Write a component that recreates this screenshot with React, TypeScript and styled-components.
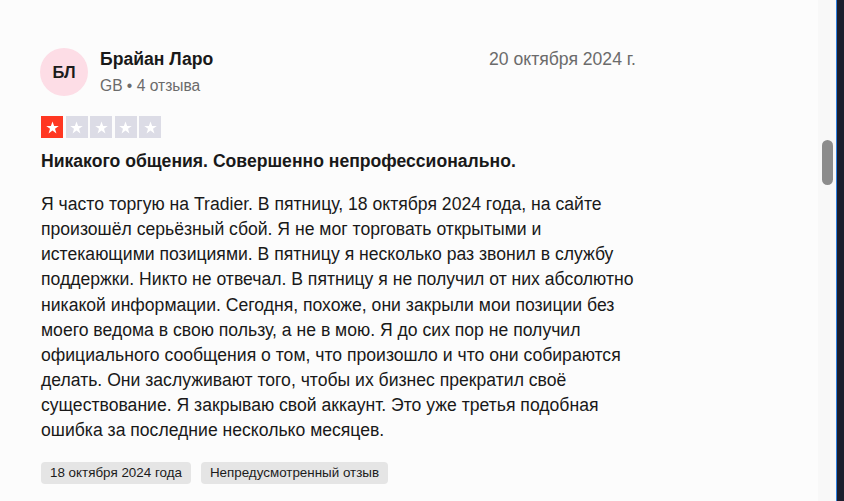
import React from "react";
import styled, { createGlobalStyle } from "styled-components";

const Global = createGlobalStyle`
  html, body { margin: 0; padding: 0; background: #fcfcfc; }
  body { font-family: "Liberation Sans", Arial, sans-serif; color: #191919; }
  * { box-sizing: border-box; }
`;

const Page = styled.div`
  display: flex;
  width: 844px;
  height: 501px;
  overflow: hidden;
`;

const Main = styled.main`
  flex: 1;
  padding: 48px 0 0 41px;
`;

const Review = styled.article`
  width: 595px;
  display: flex;
  flex-direction: column;
`;

const Header = styled.header`
  display: flex;
  align-items: flex-start;
`;

const Avatar = styled.div`
  width: 48px;
  height: 48px;
  border-radius: 50%;
  background: #fddde6;
  display: flex;
  align-items: center;
  justify-content: center;
  font-weight: 700;
  font-size: 16.5px;
  color: #1c1c1c;
  margin-left: -1px;
  flex: none;
`;

const Consumer = styled.div`
  display: flex;
  flex-direction: column;
  margin-left: 12px;
  flex: 1;
`;

const Name = styled.div`
  font-weight: 700;
  font-size: 17.6px;
  line-height: 22px;
`;

const Meta = styled.div`
  font-size: 15.6px;
  color: #6b6b6b;
  line-height: 20px;
  margin-top: 6px;
`;

const DateText = styled.time`
  font-size: 17.6px;
  color: #6b6b6b;
  line-height: 22px;
`;

const Stars = styled.div`
  display: flex;
  gap: 2.5px;
  margin-top: 20px;
`;

const StarBox = styled.div<{ $on: boolean }>`
  width: 22px;
  height: 22px;
  background: ${(p) => (p.$on ? "#ff3722" : "#dcdce6")};
  display: flex;
  align-items: center;
  justify-content: center;
`;

const Title = styled.h2`
  margin: 12px 0 0;
  font-size: 17.6px;
  font-weight: 700;
  line-height: 22px;
`;

const Body = styled.p`
  margin: 20px 0 0;
  font-size: 17.6px;
  line-height: 25.15px;
`;

const Tags = styled.div`
  display: flex;
  gap: 10px;
  margin-top: 18px;
`;

const Tag = styled.span`
  background: #e5e5e5;
  border-radius: 4px;
  font-size: 13.4px;
  line-height: 22px;
  padding: 0 9px;
  color: #1c1c1c;
`;

const ScrollTrack = styled.div`
  width: 18px;
  background: #f8f8f8;
  position: relative;
  flex: none;
`;

const Thumb = styled.div`
  position: absolute;
  left: 4px;
  top: 140px;
  width: 11px;
  height: 45px;
  border-radius: 6px;
  background: #8c8c8c;
`;

const Edge = styled.div`
  width: 8px;
  flex: none;
  background: #1b1e2d;
  border-left: 1px solid #2d7fe0;
`;

const Star = () => (
  <svg width="15" height="15" viewBox="0 0 24 24">
    <path
      fill="#fff"
      d="M12 2.5l2.6 7.1h7.4l-6 4.5 2.3 7.3L12 16.9l-6.3 4.5 2.3-7.3-6-4.5h7.4z"
    />
  </svg>
);

export default function App() {
  return (
    <>
      <Global />
      <Page>
        <Main>
          <Review>
            <Header>
              <Avatar>БЛ</Avatar>
              <Consumer>
                <Name>Брайан Ларо</Name>
                <Meta>GB • 4 отзыва</Meta>
              </Consumer>
              <DateText>20 октября 2024 г.</DateText>
            </Header>
            <Stars>
              {[0, 1, 2, 3, 4].map((i) => (
                <StarBox key={i} $on={i === 0}>
                  <Star />
                </StarBox>
              ))}
            </Stars>
            <Title>Никакого общения. Совершенно непрофессионально.</Title>
            <Body>
              Я часто торгую на Tradier. В пятницу, 18 октября 2024 года, на сайте
              произошёл серьёзный сбой. Я не мог торговать открытыми и
              истекающими позициями. В пятницу я несколько раз звонил в службу
              поддержки. Никто не отвечал. В пятницу я не получил от них абсолютно
              никакой информации. Сегодня, похоже, они закрыли мои позиции без
              моего ведома в свою пользу, а не в мою. Я до сих пор не получил
              официального сообщения о том, что произошло и что они собираются
              делать. Они заслуживают того, чтобы их бизнес прекратил своё
              существование. Я закрываю свой аккаунт. Это уже третья подобная
              ошибка за последние несколько месяцев.
            </Body>
            <Tags>
              <Tag>18 октября 2024 года</Tag>
              <Tag>Непредусмотренный отзыв</Tag>
            </Tags>
          </Review>
        </Main>
        <ScrollTrack>
          <Thumb />
        </ScrollTrack>
        <Edge />
      </Page>
    </>
  );
}
